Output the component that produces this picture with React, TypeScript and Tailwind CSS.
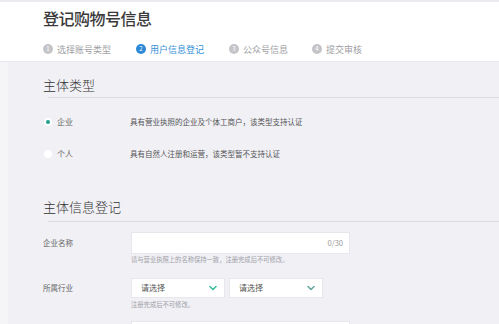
const font = { fontFamily: '"Noto Sans CJK SC", "Noto Sans", sans-serif' };

const steps = [
  { n: "1", label: "选择账号类型", w: "w-[93px]" },
  { n: "2", label: "用户信息登记", w: "w-[93px]" },
  { n: "3", label: "公众号信息", w: "w-[83px]" },
  { n: "4", label: "提交审核", w: "w-[60px]" },
];

function Chevron({ color }: { color: string }) {
  return (
    <svg width="8" height="6" viewBox="0 0 8 6" fill="none">
      <path d="M1 1.5 L4 4.5 L7 1.5" stroke={color} strokeWidth="1.6" strokeLinecap="round" strokeLinejoin="round" />
    </svg>
  );
}

function Select({ chevron }: { chevron: string }) {
  return (
    <div className="flex h-[20px] w-[94px] items-center justify-between border border-[#e6e6ec] bg-white pl-[9px] pr-[7px]">
      <span className="text-[8px] leading-none text-[#555]">请选择</span>
      <Chevron color={chevron} />
    </div>
  );
}

export default function App() {
  return (
    <div className="h-[324px] w-[499px] overflow-hidden bg-[#f0f0f5]" style={font}>
      <header className="h-[62px] border-t-2 border-b border-t-[#ececf0] border-b-[#e6e6ec] bg-white pl-[43px]">
        <h1 className="pt-[6px] text-[16px] font-medium leading-[20px] tracking-[-0.5px] text-[#3a3a3a]">登记购物号信息</h1>
        <div className="mt-[16px] flex items-center">
          {steps.map((s, i) => (
            <div key={s.n} className={`flex items-center ${s.w}`}>
              <span
                className={`mr-[4px] flex h-[10px] w-[10px] items-center justify-center rounded-full text-[6px] leading-none text-white ${
                  i === 1 ? "bg-[#2d88d6]" : "bg-[#c4c4c8]"
                }`}
              >
                {s.n}
              </span>
              <span className={`text-[9px] leading-none ${i === 1 ? "text-[#3590d8]" : "text-[#a0a0a4]"}`}>{s.label}</span>
            </div>
          ))}
        </div>
      </header>

      <div className="flex">
        <div className="w-[8px] shrink-0 bg-[#f5f5f8]" />
        <main className="flex-1 pl-[35px]">
          <h2 className="mt-[15px] text-[13px] font-light leading-[16px] text-[#333]">主体类型</h2>
          <div className="ml-[5px] mt-[4px] h-px bg-[#dcdce2]" />

          <div className="mt-[16px] flex h-[16px] items-center text-[8px] leading-none">
            <span className="ml-[1px] flex h-[8px] w-[8px] items-center justify-center rounded-full bg-white">
              <span className="h-[4px] w-[4px] rounded-full bg-[#1f9e8c]" />
            </span>
            <span className="ml-[5px] w-[73px] text-[#666]">企业</span>
            <span className="text-[7.5px] text-[#555]">具有营业执照的企业及个体工商户，该类型支持认证</span>
          </div>
          <div className="mt-[16px] flex h-[16px] items-center text-[8px] leading-none">
            <span className="ml-[1px] h-[8px] w-[8px] rounded-full bg-white" />
            <span className="ml-[5px] w-[73px] text-[#666]">个人</span>
            <span className="text-[7.5px] text-[#555]">具有自然人注册和运营，该类型暂不支持认证</span>
          </div>

          <h2 className="mt-[37px] text-[13px] font-light leading-[16px] text-[#333]">主体信息登记</h2>
          <div className="ml-[5px] mt-[6px] h-px bg-[#dcdce2]" />

          <div className="mt-[10px] flex items-center">
            <span className="w-[88px] text-[7.5px] leading-none text-[#666]">企业名称</span>
            <div className="flex h-[22px] w-[219px] items-center justify-end border border-[#e6e6ec] bg-white pr-[6px]">
              <span className="text-[7.5px] leading-none text-[#999]">0/30</span>
            </div>
          </div>
          <p className="ml-[88px] mt-[1px] h-[10px] text-[6.3px] leading-[10px] text-[#a0a0a6]">
            请与营业执照上的名称保持一致，注册完成后不可修改。
          </p>

          <div className="mt-[13px] flex items-center">
            <span className="w-[88px] text-[7.5px] leading-none text-[#666]">所属行业</span>
            <div className="flex gap-[4px]">
              <Select chevron="#3cbf9f" />
              <Select chevron="#6aa9a0" />
            </div>
          </div>
          <p className="ml-[88px] mt-[2px] h-[10px] text-[6.3px] leading-[10px] text-[#a0a0a6]">注册完成后不可修改。</p>

          <div className="ml-[88px] mt-[11px] h-[22px] w-[219px] border border-[#e6e6ec] bg-white" />
        </main>
      </div>
    </div>
  );
}
